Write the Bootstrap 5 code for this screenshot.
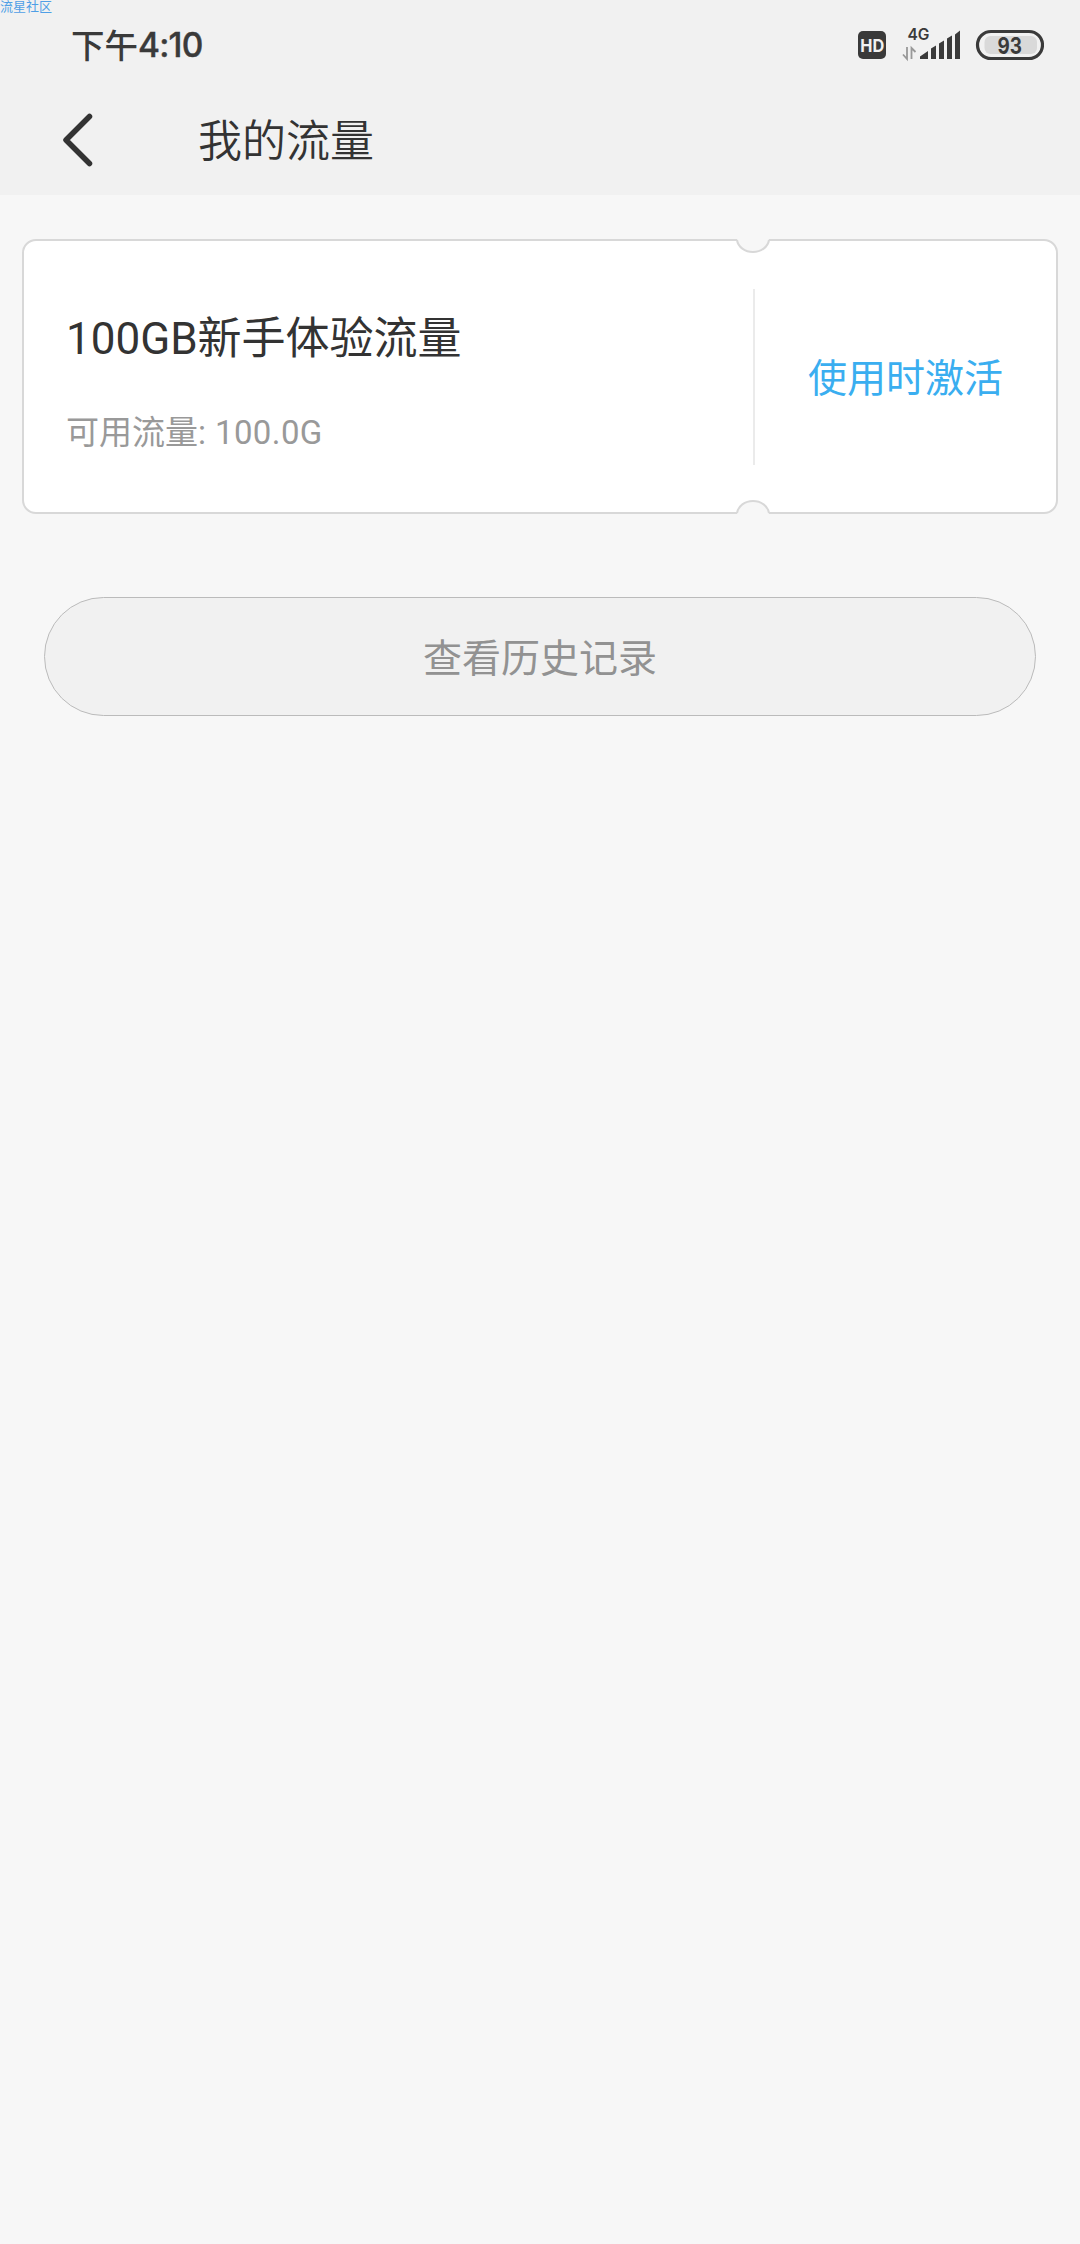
<!DOCTYPE html>
<html lang="zh-CN">
<head>
<meta charset="utf-8">
<meta name="viewport" content="width=device-width, initial-scale=1">
<title>我的流量</title>
<link href="https://cdn.jsdelivr.net/npm/bootstrap@5.3.0/dist/css/bootstrap.min.css" rel="stylesheet">
<style>
  body { background: #f7f7f7; color: #333; font-family: Roboto, "Noto Sans CJK SC", sans-serif; min-height: 2244px; }
  .app-header { background: #f1f1f1; height: 195px; }
  .status-bar { height: 88px; padding: 0 36px 0 71px; color: #3a3a3a; }
  .clock { font: 500 33.5px/1 "Noto Sans CJK SC", sans-serif; }
  .clock-digits { font: 500 33.5px/1 Inter, sans-serif; letter-spacing: -.8px; padding-top: 4px; -webkit-text-stroke: .4px #3a3a3a; }
  .title-bar { height: 104px; padding-left: 62px; }
  .page-title { font-size: 44px; line-height: 1; font-weight: 350; margin-left: 105px; padding-top: 3px; }
  .watermark { font: 13px/12px "Noto Sans CJK SC", sans-serif; color: #4f9fe6; }
  .coupon { height: 275px; margin: 44px 22px 0; border: 2px solid #d8d8d8; border-radius: 14px; }
  .coupon-info { width: 729px; padding: 12px 0 0 42px; }
  .coupon-name { font-size: 44px; line-height: 52px; font-weight: 400; }
  .coupon-left { font-size: 33px; line-height: 40px; color: #999; margin-top: 48px; }
  .coupon-amount { letter-spacing: .4px; }
  .divider { width: 2px; height: 176px; background: #ebebeb; }
  .coupon-action { color: #3aaef0; font-size: 39px; padding-top: 6px; }
  .notch { left: 711px; width: 36px; height: 16px; }
  .notch-top { top: -2px; }
  .notch-bottom { bottom: -2px; }
  .history { height: 119px; margin: 83px 44px 0; padding-top: 12px; width: 992px; background: #f1f1f1; border: 1px solid #bbb; color: #929292; font-size: 39px; }
</style>
<script src="https://cdn.jsdelivr.net/npm/bootstrap@5.3.0/dist/js/bootstrap.bundle.min.js"></script>
</head>
<body class="m-0">
<div class="watermark position-absolute top-0 start-0 text-nowrap">流星社区</div>
<header class="app-header">
  <div class="status-bar d-flex align-items-center justify-content-between">
    <div class="d-flex align-items-center"><span class="clock">下午</span><span class="clock-digits">4:10</span></div>
    <svg width="187" height="36" viewBox="857 26 187 36" font-family="Inter, sans-serif" fill="#3a3a3a">
      <rect x="858" y="31" width="28" height="28" rx="5"/>
      <text x="860.2" y="51.6" font-size="17.5" font-weight="700" fill="#f1f1f1" textLength="24" lengthAdjust="spacingAndGlyphs">HD</text>
      <text x="907.5" y="40" font-size="15.5" font-weight="600" textLength="22" lengthAdjust="spacingAndGlyphs">4G</text>
      <path d="M907 47v12l-4-4.500M911.500 59v-11l4 4" fill="none" stroke="#989898" stroke-width="1.800"/>
      <path d="M920 59v-2.500l8-5.500v8zM931 59V48.500l5-3V59zM939 59V43.500l5-3V59zM947 59V38.500l5-3V59zM955 59V34.500l5-4V59z"/>
      <rect x="977.500" y="31.500" width="65" height="27" rx="13.500" fill="none" stroke="#3a3a3a" stroke-width="3.200"/>
      <rect x="984.500" y="36" width="52.500" height="18" rx="6" fill="#d9d9d9"/>
      <text x="997.500" y="53.500" font-size="23.500" font-weight="700" textLength="24.500" lengthAdjust="spacingAndGlyphs">93</text>
    </svg>
  </div>
  <div class="title-bar d-flex align-items-center">
    <svg width="31" height="54" viewBox="0 0 31 54" fill="none" stroke="#333" stroke-width="5.500" stroke-linecap="round" stroke-linejoin="round"><path d="M27.500 3.500 4 27l23.500 23.500"/></svg>
    <h1 class="page-title mb-0">我的流量</h1>
  </div>
</header>
<main>
  <section class="coupon d-flex align-items-center position-relative bg-white">
    <div class="coupon-info">
      <h2 class="coupon-name mb-0">100GB新手体验流量</h2>
      <p class="coupon-left mb-0">可用流量<span class="coupon-amount">: 100.0G</span></p>
    </div>
    <div class="divider"></div>
    <div class="coupon-action flex-fill text-center">使用时激活</div>
    <svg class="notch notch-top position-absolute" viewBox="0 0 36 16"><path d="M2 0C3 8 10 13 18 13S33 8 34 0z" fill="#f7f7f7"/><path d="M2 1C3 8 10 13 18 13S33 8 34 1" fill="none" stroke="#d8d8d8" stroke-width="2"/></svg>
    <svg class="notch notch-bottom position-absolute" viewBox="0 0 36 16"><path d="M2 16C3 8 10 3 18 3S33 8 34 16z" fill="#f7f7f7"/><path d="M2 15C3 8 10 3 18 3S33 8 34 15" fill="none" stroke="#d8d8d8" stroke-width="2"/></svg>
  </section>
  <button type="button" class="btn history rounded-pill d-flex align-items-center justify-content-center">查看历史记录</button>
</main>
</body>
</html>
